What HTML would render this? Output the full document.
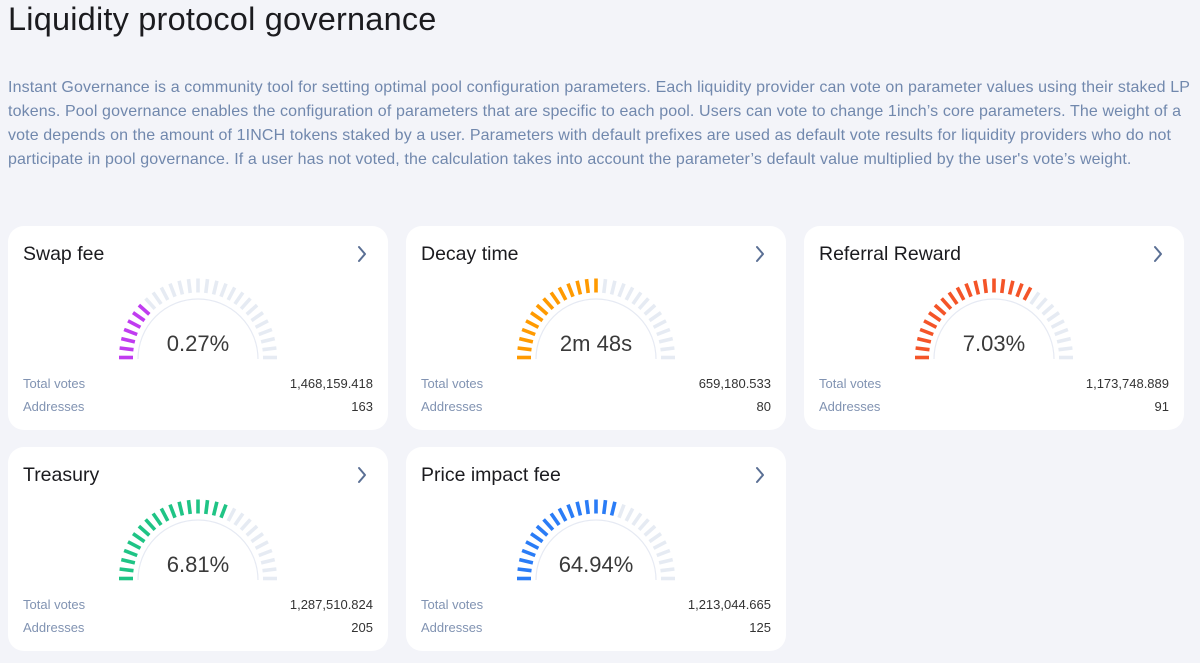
<!DOCTYPE html>
<html><head><meta charset="utf-8"><style>
body{margin:0;background:#f3f4f9;font-family:"Liberation Sans",Roboto,sans-serif;width:1200px;height:663px;overflow:hidden;position:relative}
h1{position:absolute;left:8px;top:1px;margin:0;font-size:32.5px;font-weight:400;color:#1b1b1f;letter-spacing:0.2px}
p.d{position:absolute;left:8px;top:76px;width:1192px;margin:0;font-size:16px;letter-spacing:0.12px;line-height:24px;color:#7188ad;white-space:nowrap}
.c{position:absolute;width:380px;height:204px;background:#fff;border-radius:16px}
.t{position:absolute;left:15px;top:17px;font-size:19.5px;color:#1b1b1f}
.g{position:absolute;left:0;top:0}
.r{position:absolute;left:15px;right:15px;font-size:13px;color:#8193b2}
.r span{float:right;color:#333}
</style></head><body>
<h1>Liquidity protocol governance</h1>
<p class="d">Instant Governance is a community tool for setting optimal pool configuration parameters. Each liquidity provider can vote on parameter values using their staked LP<br>tokens. Pool governance enables the configuration of parameters that are specific to each pool. Users can vote to change 1inch’s core parameters. The weight of a<br>vote depends on the amount of 1INCH tokens staked by a user. Parameters with default prefixes are used as default vote results for liquidity providers who do not<br>participate in pool governance. If a user has not voted, the calculation takes into account the parameter’s default value multiplied by the user's vote’s weight.</p>
<div id="w"></div>
<script>
var cards=[
[8,226,"Swap fee","0.27%","1,468,159.418","163",7,"#c03cf0"],
[406,226,"Decay time","2m 48s","659,180.533","80",14,"#ff9a00"],
[804,226,"Referral Reward","7.03%","1,173,748.889","91",18,"#f45428"],
[8,447,"Treasury","6.81%","1,287,510.824","205",17,"#1fc485"],
[406,447,"Price impact fee","64.94%","1,213,044.665","125",16,"#2a7cf6"]];
var h="";
cards.forEach(function(c){
 var s='<svg class="g" width="380" height="204">';
 var cx=190,cy=133,N=27;
 s+='<path d="M'+(cx-60)+' '+cy+' A60 60 0 0 1 '+(cx+60)+' '+cy+'" fill="none" stroke="#e6eaf3" stroke-width="1.2"/>';
 for(var i=0;i<N;i++){var a=Math.PI-i*Math.PI/(N-1);var co=Math.cos(a),si=Math.sin(a);
  var x1=cx+65*co,y1=cy-65*si-1.5,x2=cx+79*co,y2=cy-79*si-1.5;
  s+='<line x1="'+x1.toFixed(1)+'" y1="'+y1.toFixed(1)+'" x2="'+x2.toFixed(1)+'" y2="'+y2.toFixed(1)+'" stroke="'+(i<c[6]?c[7]:'#e6ebf3')+'" stroke-width="3.6"/>';}
 s+='<text x="'+cx+'" y="125" text-anchor="middle" font-family="Liberation Sans,sans-serif" font-size="22" fill="#3a3a3a">'+c[3]+'</text>';
 s+='<path d="M351 21 L357 28 L351 35" fill="none" stroke="#5a6f94" stroke-width="2" stroke-linecap="round" stroke-linejoin="round"/>';
 s+='</svg>';
 h+='<div class="c" style="left:'+c[0]+'px;top:'+c[1]+'px">'+s+'<div class="t">'+c[2]+'</div><div class="r" style="top:150px">Total votes<span>'+c[4]+'</span></div><div class="r" style="top:173px">Addresses<span>'+c[5]+'</span></div></div>';
});
document.getElementById("w").innerHTML=h;
</script>
</body></html>
